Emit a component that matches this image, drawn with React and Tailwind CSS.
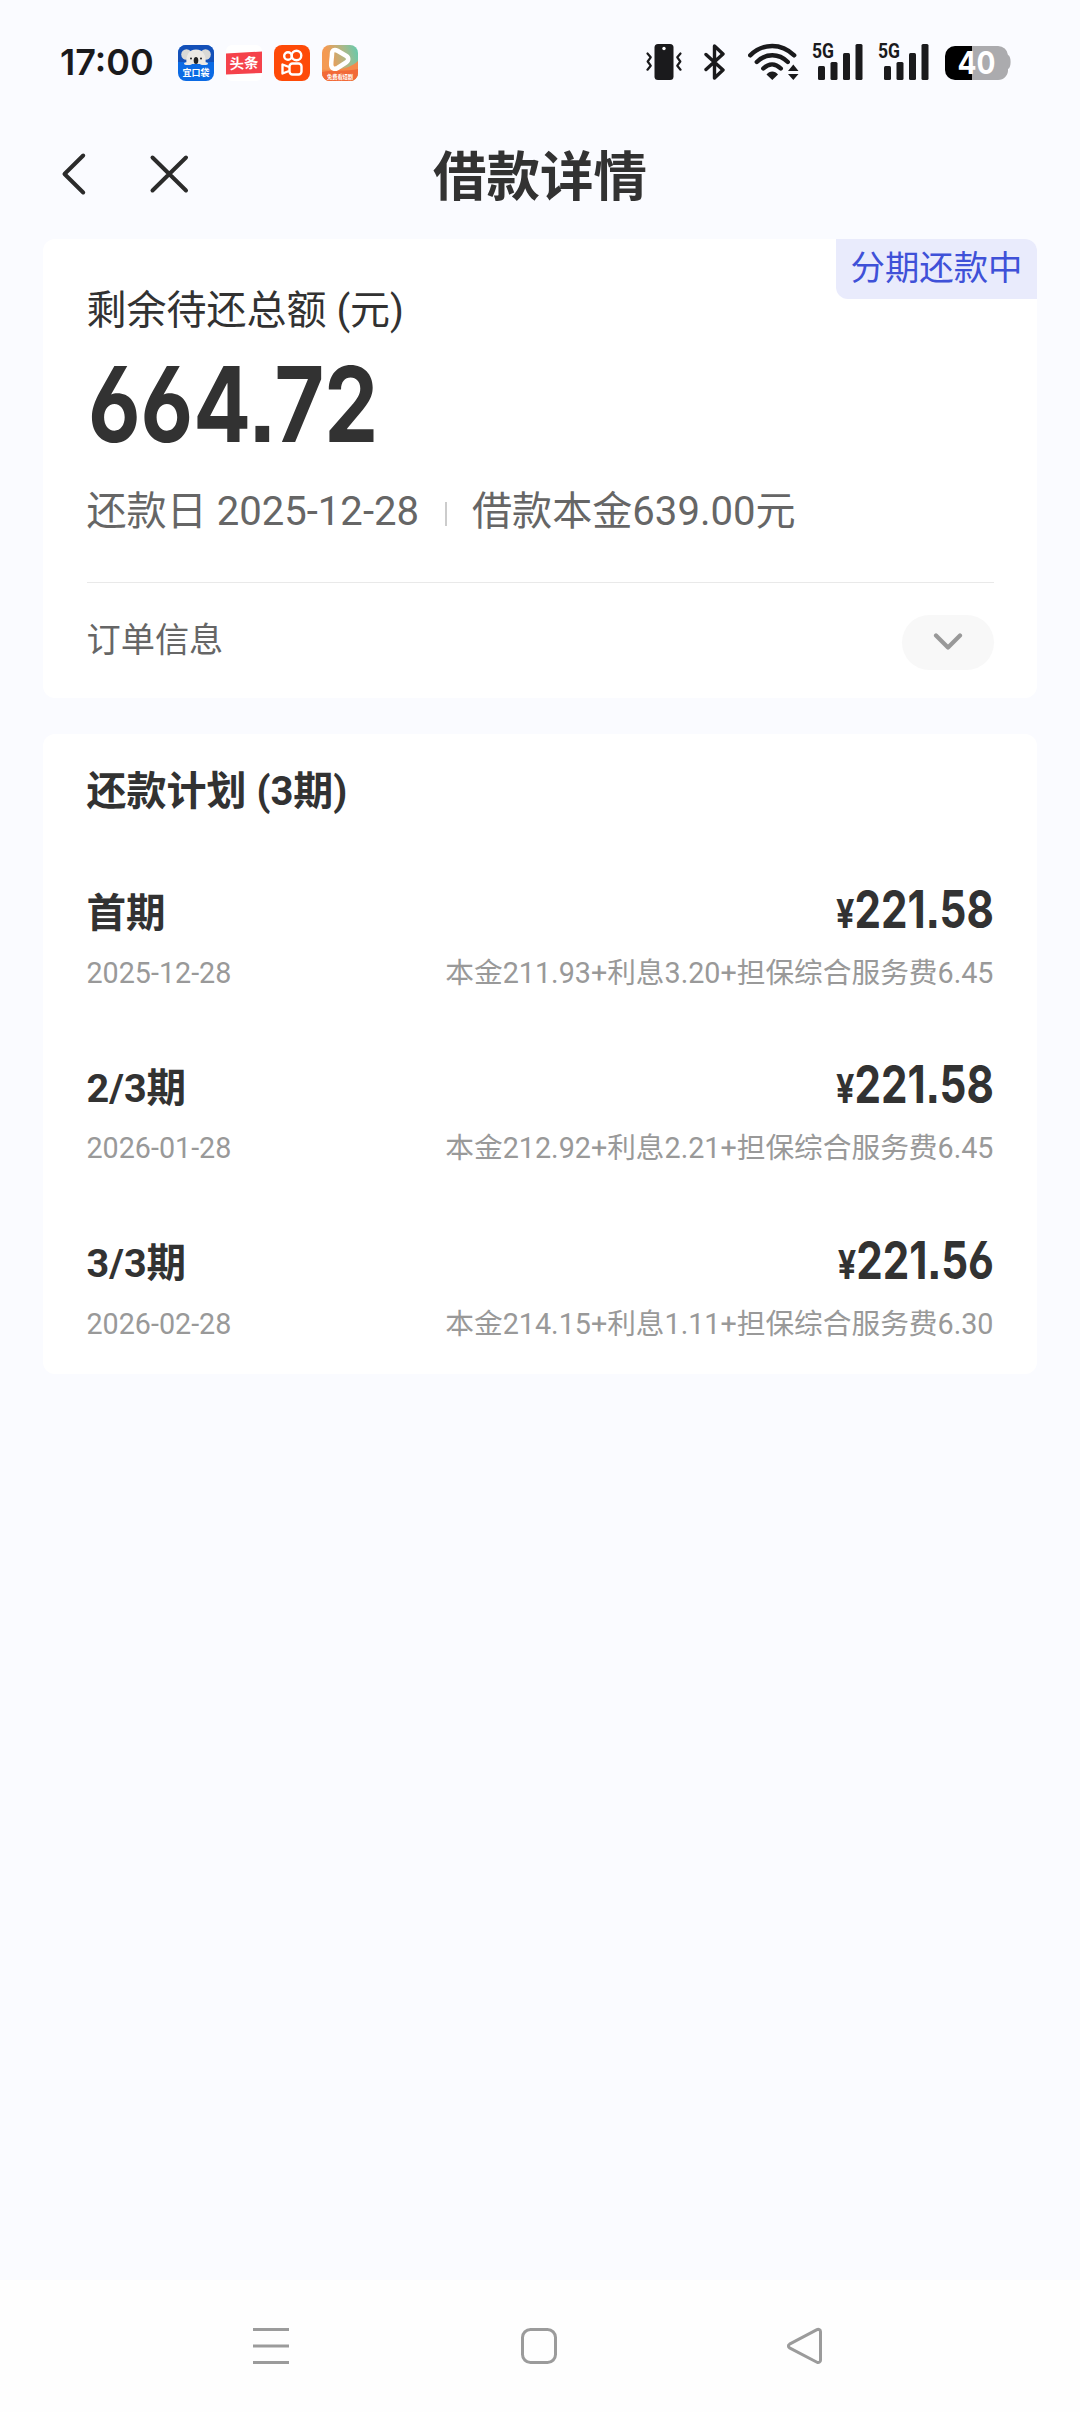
import React, { useState } from "react";

const plans = [
  { term: "首期", date: "2025-12-28", amount: "221.58", detail: "本金211.93+利息3.20+担保综合服务费6.45" },
  { term: "2/3期", date: "2026-01-28", amount: "221.58", detail: "本金212.92+利息2.21+担保综合服务费6.45" },
  { term: "3/3期", date: "2026-02-28", amount: "221.56", detail: "本金214.15+利息1.11+担保综合服务费6.30" },
];

function AppIcons() {
  return (
    <div className="ml-[25px] flex gap-3">
      {/* Koala wallet */}
      <svg width="36" height="36" viewBox="0 0 36 36">
        <rect width="36" height="36" rx="8" fill="#0b6ae4" />
        <path d="M0 17V8a8 8 0 0 1 8-8h20a8 8 0 0 1 8 8v9z" fill="#1450b8" />
        <circle cx="8.500" cy="9.500" r="5.300" fill="#d9d9d6" />
        <circle cx="27.500" cy="9.500" r="5.300" fill="#d9d9d6" />
        <path d="M8.500 19c-1-9 2.500-14.500 9.500-14.500S28.500 10 27.500 19z" fill="#ece9e4" />
        <ellipse cx="18" cy="15.500" rx="2.300" ry="3.500" fill="#222" />
        <circle cx="13" cy="13.500" r="1" fill="#222" />
        <circle cx="23" cy="13.500" r="1" fill="#222" />
        <ellipse cx="10" cy="18.500" rx="4" ry="1.600" fill="#ece9e4" />
        <ellipse cx="26" cy="18.500" rx="4" ry="1.600" fill="#ece9e4" />
        <text x="18" y="31" textAnchor="middle" fontSize="9" fontWeight="700" fill="#fff" fontFamily="Noto Sans CJK SC, sans-serif">宜口袋</text>
      </svg>
      {/* Headlines */}
      <svg width="36" height="36" viewBox="0 0 36 36">
        <rect width="36" height="36" rx="6" fill="#fff" />
        <path d="M0 8.500L36 6.500V28L0 29.500z" fill="#f5424b" />
        <text x="18" y="23.500" textAnchor="middle" fontSize="14.500" fontWeight="700" fill="#fff" fontFamily="Noto Sans CJK SC, sans-serif" transform="rotate(-3 18 18)">头条</text>
      </svg>
      {/* Video camera */}
      <svg width="36" height="36" viewBox="0 0 36 36" fill="none" stroke="#fff" strokeWidth="2.400">
        <rect width="36" height="36" rx="8" fill="#fe4a08" stroke="none" />
        <circle cx="14" cy="11" r="3.800" />
        <circle cx="22.500" cy="10.500" r="4.800" />
        <rect x="15.500" y="18.500" width="12" height="11" rx="3" />
        <path d="M15 22l-6.500-2.500v9L15 26" strokeLinejoin="round" />
      </svg>
      {/* Short drama player */}
      <svg width="36" height="36" viewBox="0 0 36 36">
        <defs>
          <linearGradient id="play" x1="0" y1="0.300" x2="1" y2="0">
            <stop offset="0.150" stopColor="#f49a52" />
            <stop offset="0.600" stopColor="#a9b98a" />
            <stop offset="1" stopColor="#5fcbb0" />
          </linearGradient>
          <clipPath id="playClip"><rect width="36" height="36" rx="8" /></clipPath>
        </defs>
        <g clipPath="url(#playClip)">
          <rect width="36" height="36" fill="url(#play)" />
          <path d="M0 25c9-1 24 2 36-9v20H0z" fill="#f58a4a" />
          <path d="M0 27c10-3 26 0 36-3v12H0z" fill="#f26a38" />
          <path d="M10 9c0-4 2.500-5 5.500-3.200l8.500 4.900c3 1.800 3 5 0 6.800l-8.500 5.500c-3 1.800-6 .5-6.300-3C9 16 10 13 10 9z" fill="none" stroke="#fff" strokeWidth="4.500" />
          <text x="18" y="33.500" textAnchor="middle" fontSize="5.200" fontWeight="700" fill="#fff" fontFamily="Noto Sans CJK SC, sans-serif">免费看短剧</text>
        </g>
      </svg>
    </div>
  );
}

function Signal() {
  return (
    <svg className="-mt-2 overflow-visible" width="51" height="46" viewBox="0 -8 51 46" fill="#1a1a1c">
      <text x="0" y="15" fontSize="20" fontWeight="700" fontFamily="Roboto, sans-serif" textLength="22" lengthAdjust="spacingAndGlyphs">5G</text>
      <rect x="6" y="23" width="7" height="14" rx="1.500" />
      <rect x="18.500" y="19" width="7" height="18" rx="1.500" />
      <rect x="31" y="10" width="7" height="27" rx="1.500" />
      <rect x="43.500" y="1" width="7" height="36" rx="1.500" />
    </svg>
  );
}

function StatusBar() {
  return (
    <div className="flex h-[126px] items-start pt-[45px] pl-[60px]">
      <div className="-mt-1 w-[93px] whitespace-nowrap font-[Inter,sans-serif] text-[36px] leading-[42px] font-semibold text-[#1a1a1c]">17:00</div>
      <AppIcons />
      <div className="-mt-0.5 ml-auto flex pr-[68px]">
        {/* Vibrate */}
        <svg width="36" height="38" viewBox="0 0 36 38" fill="none" stroke="#1a1a1c" strokeWidth="2.200" strokeLinecap="round" strokeLinejoin="round">
          <rect x="8.500" y="1" width="19" height="36" rx="3.500" fill="#1a1a1c" stroke="none" />
          <circle cx="18" cy="5.500" r="1.700" fill="#fff" stroke="none" />
          <path d="M1.500 10.500l3.200 3.800-3 4.200 3 4.200-3.200 4M34.500 10.500l-3.200 3.800 3 4.200-3 4.200 3.200 4" />
        </svg>
        {/* Bluetooth */}
        <svg className="ml-[22px]" width="22" height="38" viewBox="0 0 22 38" fill="none" stroke="#1a1a1c" strokeWidth="3.400" strokeLinejoin="round" strokeLinecap="round">
          <path d="M2 11.500L19 27l-8.500 8V3L19 11 2 26.500" />
        </svg>
        {/* Wifi */}
        <svg className="ml-[22px]" width="51" height="38" viewBox="0 0 51 38" fill="none" stroke="#1a1a1c" strokeWidth="4.400" strokeLinecap="round">
          <path d="M2.200 12.300c13-12.500 31-12.500 44 0M8.800 19c9-9 22-9 31 0M15.300 25.500c5.500-5.500 12-5.500 17.500 0" />
          <path d="M18.500 31.500c3-4 8.500-4 11.500 0L24.300 37z" fill="#1a1a1c" stroke="none" />
          <path d="M40 28h10.500l-5.200-6.500zM40 31h10.500l-5.200 6z" fill="#1a1a1c" stroke="none" />
        </svg>
        <div className="ml-[13px] flex gap-[15px]">
          <Signal />
          <Signal />
        </div>
        {/* Battery */}
        <svg className="ml-4" width="67" height="38" viewBox="0 0 67 38">
          <path d="M27 3h26a10 10 0 0 1 10 9c3.500 1 3.500 13 0 14a10 10 0 0 1-10 11H27z" fill="#ababae" />
          <path d="M27 3H10A10 10 0 0 0 0 13v14a10 10 0 0 0 10 10h17z" fill="#000" />
          <text x="12.500" y="31" fontSize="31" fontWeight="700" fontFamily="Inter, sans-serif" fill="#fff" textLength="38" lengthAdjust="spacingAndGlyphs">40</text>
        </svg>
      </div>
    </div>
  );
}

function Header() {
  return (
    <div className="grid h-[112px] grid-cols-3 items-start pt-[14px]">
      <div className="flex pt-3 pl-[60px]">
        <svg width="28" height="44" viewBox="0 0 28 44" fill="none" stroke="#2b2b2b" strokeWidth="4" strokeLinecap="round" strokeLinejoin="round">
          <path d="M23.200 3.500L4.500 22l18.700 18.500" />
        </svg>
        <svg className="ml-[60px]" width="44" height="44" viewBox="0 0 44 44" fill="none" stroke="#2b2b2b" strokeWidth="4" strokeLinecap="round">
          <path d="M4.500 5.500l33.500 33M38 5.500l-33.500 33" />
        </svg>
      </div>
      <h1 className="pt-[3px] text-center text-[53.5px] leading-[70px] font-bold">借款详情</h1>
    </div>
  );
}

function Summary() {
  const [open, setOpen] = useState(false);

  return (
    <div className="relative mx-[43px] mt-px h-[459px] rounded-xl bg-white px-[43.5px] pt-[48px]">
      <div className="absolute top-0 right-0 h-[60px] w-[201px] rounded-tr-xl rounded-bl-xl bg-[#e9ebfc] text-center text-[34.4px] leading-[59px] text-[#3f51d8]">分期还款中</div>
      <div className="text-[40px] leading-[48px]">剩余待还总额 (元)</div>
      <div className="mt-[17px] ml-px h-[104px] origin-left scale-x-[0.815] font-[Inter,sans-serif] text-[105px] leading-[104px] font-bold [font-feature-settings:'cv03','ss07']">664.72</div>
      <div className="mt-[32px] flex items-center text-[40.1px] leading-[48px] text-[#666]">
        <span>还款日 2025-12-28</span>
        <span className="mt-1 mr-[25px] ml-[26px] h-6 w-0.5 bg-[#ccc]" />
        <span>借款本金639.00元</span>
      </div>
      <div className="mt-[46px] flex items-start justify-between border-t border-[#e9e9e9] pt-8">
        <span className="pt-px text-[34.2px] leading-[48px] text-[#666]">订单信息</span>
        <button onClick={() => setOpen(!open)} className="flex h-[55px] w-[92px] items-center justify-center rounded-full bg-[#f8f8f8]">
          <svg width="30" height="20" viewBox="0 0 30 20" fill="none" stroke="#999" strokeWidth="4.200" strokeLinecap="round" strokeLinejoin="round">
            <path d="M3 2.500l12 12 12-12" />
          </svg>
        </button>
      </div>
    </div>
  );
}

function PlanRow({ plan }) {
  return (
    <div className="h-[175.4px]">
      <div className="flex h-[50px] justify-between">
        <span className="pt-[1.5px] text-[39.6px] leading-[50px] font-bold">{plan.term}</span>
        <span className="origin-right scale-x-[0.81] font-[Inter,sans-serif] text-[52px] leading-[45px] font-bold [font-feature-settings:'cv03','ss07']">
          <span className="text-[40px]">¥</span>{plan.amount}
        </span>
      </div>
      <div className="mt-4 flex justify-between text-[28.7px] leading-10 text-[#999]">
        <span>{plan.date}</span>
        <span>{plan.detail}</span>
      </div>
    </div>
  );
}

function NavBar() {
  return (
    <div className="mt-auto h-[132px] bg-[#fefefe] pt-[47px]">
      <div className="flex pl-[252px]">
        <svg width="38" height="38" viewBox="0 0 38 38" stroke="#9b9b9b" strokeWidth="3">
          <path d="M1 2.500h36M1 19h36M1 35.500h36" />
        </svg>
        <svg className="ml-[230px]" width="38" height="38" viewBox="0 0 38 38" fill="none" stroke="#9b9b9b" strokeWidth="3">
          <rect x="2.500" y="2.500" width="33" height="33" rx="8" />
        </svg>
        <svg className="ml-[228px]" width="38" height="38" viewBox="0 0 38 38" fill="none" stroke="#9b9b9b" strokeWidth="3" strokeLinejoin="round">
          <path d="M3.500 17.200L31 2.700c1.500-.8 3.500 0 3.500 2v28.500c0 2-2 2.800-3.500 2L3.500 20.800c-1.500-.8-1.500-2.800 0-3.600z" />
        </svg>
      </div>
    </div>
  );
}

function App() {
  return (
    <div className="flex h-[2412px] w-[1080px] flex-col overflow-hidden bg-[#fafbff] font-[Roboto,'Noto_Sans_CJK_SC',sans-serif] text-[#323232]">
      <StatusBar />
      <Header />
      <Summary />
      <div className="mx-[43px] mt-9 h-[640px] rounded-xl bg-white px-[43.5px] pt-[34px]">
        <h2 className="text-[40px] leading-[48px] font-bold">还款计划 (3期)</h2>
        <div className="mt-[71px]">
          {plans.map((plan) => (
            <PlanRow key={plan.date} plan={plan} />
          ))}
        </div>
      </div>
      <NavBar />
    </div>
  );
}

export default App;
